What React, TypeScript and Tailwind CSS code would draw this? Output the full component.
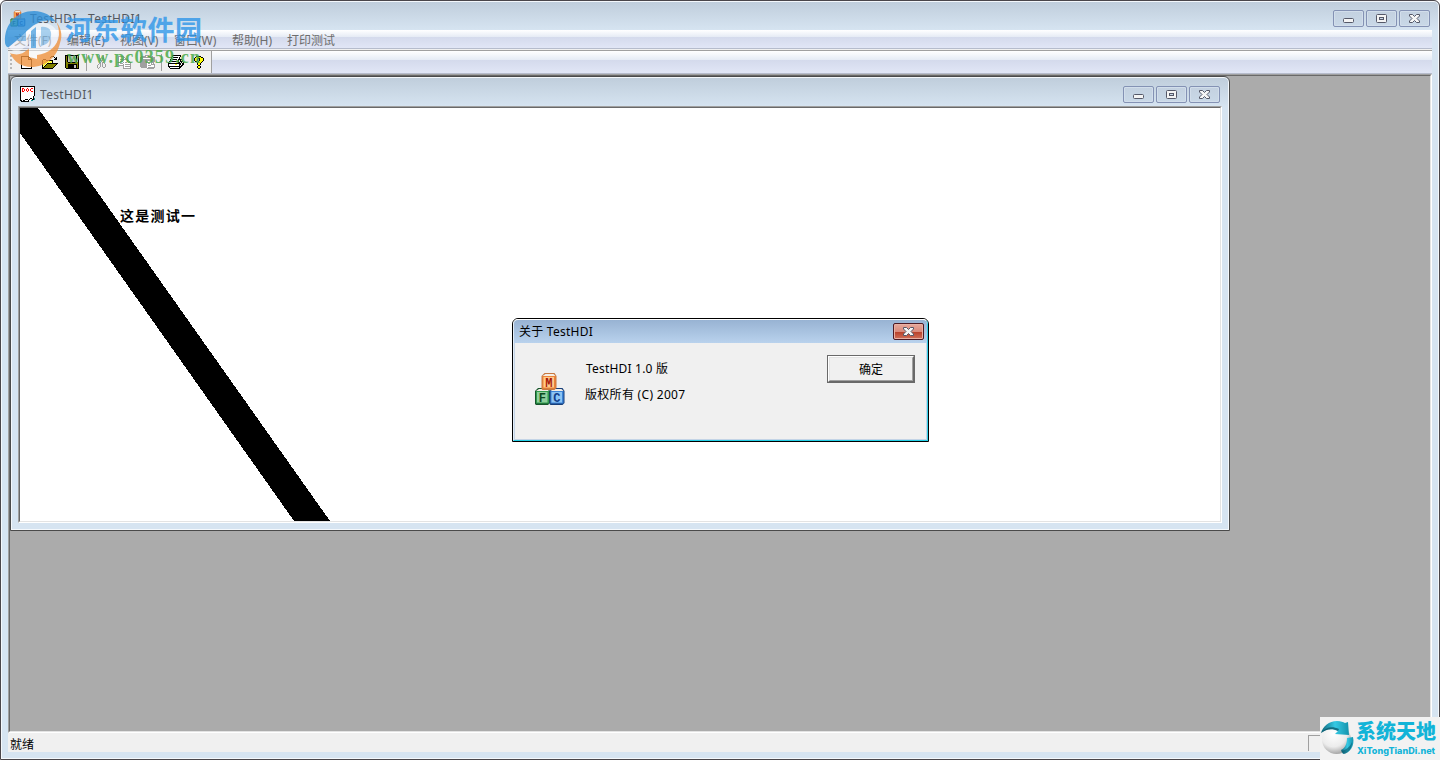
import type { ReactNode } from 'react';

const COLORS: Record<string, string> = {
  k: '#000000',
  w: '#ffffff',
  y: '#ffff00',
  p: '#ffff99',
  o: '#808000',
  g: '#a0a0a0',
  s: '#c0c0c0',
  r: '#ff0000',
  t: '#109090',
};

const NEW_FILE = [
  'kkkkkkkk....',
  'kwwwwwwkk...',
  'kwwwwwwkwk..',
  'kwwwwwwkkkk.',
  'kwwwwwwwwwk.',
  'kwwwwwwwwwk.',
  'kwwwwwwwwwk.',
  'kwwwwwwwwwk.',
  'kwwwwwwwwwk.',
  'kwwwwwwwwwk.',
  'kwwwwwwwwwk.',
  'kwwwwwwwwwk.',
  'kkkkkkkkkkk.',
];

const OPEN_FILE = [
  '.........kkk....',
  '........k...k.k.',
  '.............kk.',
  '.kkk........kkk.',
  'kpypkkkkkkk.....',
  'kypypypypyk.....',
  'kpypypypypk.....',
  'kypypkkkkkkkkkkk',
  'kpypkoooooooook.',
  'kypkoooooooook..',
  'kpkoooooooook...',
  'kkoooooooook....',
  'kkkkkkkkkkk.....',
];

const SAVE_FILE = [
  'kkkkkkkkkkkkkk',
  'kokssssssssksk',
  'kokssssssssksk',
  'kokssssssssksk',
  'kokssssssssksk',
  'kokssssssssksk',
  'kokssssssssksk',
  'kookkkkkkkkook',
  'kooooooooooook',
  'kookkkkkkkkkok',
  'kookkkkkksskok',
  'kookkkkkksskok',
  'kookkkkkksskok',
  '.kkkkkkkkkkkkk',
];

const CUT = [
  '..g...g..',
  '..g...g..',
  '..g...g..',
  '..gg.gg..',
  '...g.g...',
  '...ggg...',
  '....g....',
  '...g.gg..',
  '..gg.g.g.',
  '.g.g.g..g',
  'g..g.g..g',
  'g..g.g..g',
  'g.g...gg.',
  '.g.......',
];

const COPY = [
  'gggggg.......',
  'gwwwwgg......',
  'gwwwwgwg.....',
  'gwgggggggg...',
  'gwwwwgwwwgg..',
  'gwgggwwwwgwg.',
  'gwwwwgwggwggg',
  'gwgggwwwwwwwg',
  'gwwwwgwgggggg',
  'ggggggwwwwwwg',
  '.....gwgggggg',
  '.....gwwwwwwg',
  '.....gggggggg',
];

const PASTE = [
  '.....gggg......',
  '.gggggwwggggg..',
  'ggggggggggggggg',
  'gggwwwwwwwwgggg',
  'ggggggggggggggg',
  'ggggggggggggggg',
  'ggggggggwwwgggg',
  'gggggggwwwwggg.',
  'gggggggwggwgwg.',
  'gggggggwwwwgggg',
  'gggggggwgggwwwg',
  'gggggggwwwwwwwg',
  '.ggggggwggggggg',
  '.......ggggggg.',
];

const PRINT = [
  '....kkkkkkkkk...',
  '....kwwwwwwwk...',
  '...kwkkkkkwk....',
  '...kwwwwwwwk....',
  '..kwkkkkkwkkkk..',
  '..kwwwwwwwk.k.k.',
  '.kkkkkkkkkk.kkk.',
  'kwwwwwwwwwkk.k.k',
  'kkkkkkkkkkkkk.kk',
  'kwwwwwwyywwkkwkk',
  'kwwwwwwwwwwk.kk.',
  'kkkkkkkkkkkkkk..',
  '.kwwwwwwwwwkk...',
  '..kkkkkkkkkk....',
];

const HELP = [
  '..kkkkk...',
  '.kyyyyykk.',
  'kyyykkyyyk',
  'kyyk.kyyyk',
  'kyyk.kyyyk',
  '.kk.kyyyk.',
  '...kyyyk..',
  '...kyyk...',
  '...kyyk...',
  '....kk....',
  '...kyyk...',
  '...kyyk...',
  '....kk....',
];

const DOC = [
  'kkkkkkkkkkkkkkk',
  'kwwwwwwwwwwwwwk',
  'kwrrwwwrwwwrrwk',
  'kwrwrwrwrwrwwwk',
  'kwrwrwrwrwrwwwk',
  'kwrrwwwrwwwrrwk',
  'kwwwwwwwwwwwwwk',
  'kwwwwwwwwwwwwwk',
  'kwwwwwwwwwwwwwk',
  'kwwwwwwwwwwwwwk',
  'kwwwwwwwwwwwwk.',
  'kwwwwwwwwwwwwk.',
  'kwwwwwwwwwkkwkt',
  'kwwwwkkkwkwwkkt',
  'kkwkkwwwkwwtt..',
  '.kkkkkkkk......',
];

function PixelIcon({ rows }: { rows: string[] }) {
  const w = rows[0].length;
  return (
    <svg width={w} height={rows.length} viewBox={`0 0 ${w} ${rows.length}`} shapeRendering="crispEdges" className="block shrink-0">
      {rows.map((row, y) =>
        row.split('').map((c, x) =>
          COLORS[c] ? <rect key={`${x}-${y}`} x={x} y={y} width="1" height="1" fill={COLORS[c]} /> : null
        )
      )}
    </svg>
  );
}

function Block({ x, y, letter, face, edge, side, ink }: { x: number; y: number; letter: string; face: string; edge: string; side: string; ink: string }) {
  return (
    <g>
      <path d={`M${x} ${y + 3}l3 -3h10l2 3v12l-2 2h-12l-1 -1z`} fill={edge} />
      <path d={`M${x + 1} ${y + 3}l3 -2h8l2 2z`} fill="#f4eee6" />
      <rect x={x + 1} y={y + 3} width="13" height="12.5" fill={side} />
      <rect x={x + 2} y={y + 4} width="10.5" height="10.5" fill={face} />
      <text x={x + 7.3} y={y + 13.6} textAnchor="middle" fontSize="12" fontWeight="700" fontFamily="'Liberation Mono', monospace" fill={ink}>
        {letter}
      </text>
    </g>
  );
}

function MfcIcon({ size }: { size: number }) {
  return (
    <svg width={size} height={size} viewBox="0 0 32 34" className="block shrink-0">
      <Block x={0} y={16} letter="F" face="#8fcf9c" edge="#16542a" side="#2f9a4c" ink="#0e4a20" />
      <Block x={14.5} y={16} letter="C" face="#8cc4f4" edge="#173f7a" side="#3d84d8" ink="#123f8c" />
      <Block x={6.5} y={1} letter="M" face="#ffc98a" edge="#c87840" side="#ee8438" ink="#a81808" />
    </svg>
  );
}

function CloseGlyph() {
  return (
    <path
      d="M1.5 1.5h3l2 2 2-2h3v1.5l-2.5 2.5 2.5 2.5v1.5h-3l-2-2-2 2h-3v-1.5l2.5-2.5-2.5-2.5z"
      fill="#f6f6f6"
      stroke="#555868"
    />
  );
}

function CaptionButton({ kind }: { kind: 'min' | 'max' | 'close' }) {
  return (
    <button className="flex h-[17px] w-[31px] items-center justify-center rounded-[2px] border border-[#8492b4] bg-gradient-to-b from-[#c3d1e0] to-[#c9d8e7] shadow-[inset_0_0_0_1px_#d2deeb]">
      <svg width="13" height="11" viewBox="0 0 13 11" className="block">
        {kind === 'min' && <rect x="1.5" y="5.5" width="10" height="4" rx="1" fill="#f4f4f4" stroke="#555868" />}
        {kind === 'max' && (
          <>
            <rect x="1.5" y="1.5" width="10" height="8" rx="1" fill="#f4f4f4" stroke="#555868" />
            <rect x="4.5" y="4.5" width="4" height="2" fill="#c9d8e7" stroke="#555868" />
          </>
        )}
        {kind === 'close' && <CloseGlyph />}
      </svg>
    </button>
  );
}

function CaptionButtons() {
  return (
    <div className="ml-auto flex gap-[2px]">
      <CaptionButton kind="min" />
      <CaptionButton kind="max" />
      <CaptionButton kind="close" />
    </div>
  );
}

function Tool({ width, children }: { width: string; children: ReactNode }) {
  return <div className={`flex h-full items-center ${width}`}>{children}</div>;
}

function MenuBar() {
  return (
    <nav className="flex h-[19px] items-center border-b border-[#b6bccc] bg-[linear-gradient(#ffffff_0,#e5ebf5_7px,#d4daec_7px,#e1e6f6_18px)] pl-[6px] pt-[3px] text-[#6d6d6d]">
      <span className="w-[53px]">文件(F)</span>
      <span className="w-[53px]">编辑(E)</span>
      <span className="w-[54px]">视图(V)</span>
      <span className="w-[58px]">窗口(W)</span>
      <span className="w-[55px]">帮助(H)</span>
      <span>打印测试</span>
    </nav>
  );
}

function ToolBar() {
  return (
    <div className="flex h-[23px] border-b border-[#b6bccc] bg-[linear-gradient(#ffffff_0,#e5ebf5_9px,#d4daec_9px,#e1e6f6_22px)]">
      <div className="flex h-[22px] w-[204px] items-center border-r border-[#a0a0a0] bg-[#f0f0f0]">
        <div className="ml-[2px] flex w-[11px] flex-col gap-[2px]">
          <i className="block size-[2px] bg-[#b8b8b8]" />
          <i className="block size-[2px] bg-[#b8b8b8]" />
          <i className="block size-[2px] bg-[#b8b8b8]" />
          <i className="block size-[2px] bg-[#b8b8b8]" />
        </div>
        <Tool width="w-[21px]"><PixelIcon rows={NEW_FILE} /></Tool>
        <Tool width="w-[23px]"><PixelIcon rows={OPEN_FILE} /></Tool>
        <Tool width="w-[21px]"><PixelIcon rows={SAVE_FILE} /></Tool>
        <div className="mr-[10px] h-[17px] w-px bg-[#a0a0a0]" />
        <Tool width="w-[21px]"><PixelIcon rows={CUT} /></Tool>
        <Tool width="w-[22px]"><PixelIcon rows={COPY} /></Tool>
        <Tool width="w-[21px]"><PixelIcon rows={PASTE} /></Tool>
        <div className="mr-[6px] h-[17px] w-px bg-[#a0a0a0]" />
        <Tool width="w-[26px]"><PixelIcon rows={PRINT} /></Tool>
        <Tool width="w-[12px]"><PixelIcon rows={HELP} /></Tool>
      </div>
    </div>
  );
}

function ChildWindow() {
  return (
    <section className="flex h-[455px] w-[1220px] flex-col rounded-t-[6px] border border-[#4a4a4a] bg-[#d6e4f1] bg-[linear-gradient(#bfcddb_0,#d6e4f1_30px)] px-[7px] pb-[7px] shadow-[inset_0_0_0_1px_#f4f8fc]">
      <header className="flex h-[29px] items-center pl-[2px] pr-[2px] pt-[5px] text-[#54585e]">
        <PixelIcon rows={DOC} />
        <span className="ml-[5px] pt-px tracking-[0.3px]">TestHDI1</span>
        <CaptionButtons />
      </header>
      <div className="flex flex-1 border border-b-white border-l-[#a0a0a0] border-r-white border-t-[#a0a0a0]">
        <div className="flex-1 border border-b-[#e3e3e3] border-l-[#696969] border-r-[#e3e3e3] border-t-[#696969] bg-white">
          <svg width="1200" height="413" viewBox="0 0 1200 413" className="block">
            <polygon points="0,0 18,0 310,413 274,413 0,25" fill="#000" shapeRendering="crispEdges" />
            <text x="100" y="113" fontSize="14" fontWeight="700" textLength="75" fontFamily="'Noto Sans CJK SC', sans-serif">
              这是测试一
            </text>
          </svg>
        </div>
      </div>
    </section>
  );
}

function AboutDialog() {
  return (
    <section className="absolute left-[512px] top-[318px] flex h-[124px] w-[417px] flex-col rounded-t-[6px] border border-black bg-[#f0f0f0] text-black">
      <div className="flex flex-1 flex-col overflow-hidden rounded-t-[5px] border-b border-l border-r border-t border-b-[#22cfe6] border-l-[#e4eef8] border-r-[#33cfe6] border-t-white">
        <header className="flex h-[23px] items-center bg-gradient-to-b from-[#98b3d3] to-[#b9d2ed] pl-[5px] pr-[3px]">
          <span className="tracking-[0.25px]">关于 TestHDI</span>
          <button className="ml-auto flex h-[17px] w-[31px] items-center justify-center rounded-[2px] border border-[#4c1a24] bg-[linear-gradient(#e6a99c_0,#d8887a_8px,#b8402a_8px,#d0705a_15px)] shadow-[inset_0_0_0_1px_#e8b0a4]">
            <svg width="13" height="11" viewBox="0 0 13 11" className="block">
              <CloseGlyph />
            </svg>
          </button>
        </header>
        <div className="flex flex-1 border-b border-l border-r border-[#c4d4e6] pl-[19px] pr-[11px]">
          <div className="pt-[29px]">
            <MfcIcon size={34} />
          </div>
          <div className="ml-[17px] pt-[17px]">
            <p className="h-[26px] pl-px leading-[18px] tracking-[0.2px]">TestHDI 1.0 版</p>
            <p className="leading-[18px] tracking-[0.3px]">版权所有 (C) 2007</p>
          </div>
          <button className="ml-auto mt-[12px] h-[28px] w-[88px] border border-[#696969]">
            <span className="flex h-full items-center justify-center border border-b-[#696969] border-l-white border-r-[#696969] border-t-white">
              <span className="flex h-full w-full items-center justify-center border border-b-[#a0a0a0] border-l-[#e3e3e3] border-r-[#a0a0a0] border-t-[#e3e3e3] pt-[2px]">确定</span>
            </span>
          </button>
        </div>
      </div>
    </section>
  );
}

function HedongWatermark() {
  return (
    <div className="pointer-events-none absolute left-0 top-0">
      <svg width="210" height="76" viewBox="0 0 210 76" className="block">
        {/* blue swoosh, white arch, orange swoosh */}
        <path d="M5 42C4 24 17 11 34 11c10 0 18 5 22 11-6-2-13-2-18 1-7 3-11 8-17 14L9 47c-2 1-4-2-4-5z" fill="#2d8fd8" opacity="0.8" />
        <path d="M9 47l13-11c6-6 12-12 19-13 9-1 17 5 17 14 0 10-8 16-17 17l-2 8-10-5V44l-8 6c-5 3-10 1-12-3z" fill="#fff" opacity="0.5" />
        <path d="M17 41l9-10v10z" fill="#2d8fd8" opacity="0.5" />
        <path d="M31 31l5-4v21h-5z" fill="#2d8fd8" opacity="0.65" />
        <path d="M41 27c7-1 11 3 10 9-1 6-5 9-10 10z" fill="#2d8fd8" opacity="0.4" />
        <path d="M55 20c6 7 8 15 5 23-3 14-14 24-29 24-9 0-17-5-21-14 7 3 13 1 17-3l2-1v8l8 2v-4c11-1 21-9 22-20 0-6-1-11-4-15z" fill="#f09440" opacity="0.8" />
        <text x="65" y="40" fontSize="27" fontWeight="700" textLength="137" fontFamily="'Noto Sans CJK SC', sans-serif" fill="#2f96e8" opacity="0.8">
          河东软件园
        </text>
        <text x="67" y="63" fontSize="18" fontWeight="700" textLength="133" fontFamily="'Liberation Serif', serif" fill="#4cab4c" opacity="0.85">
          www.pc0359.cn
        </text>
      </svg>
    </div>
  );
}

function TiandiWatermark() {
  return (
    <div className="absolute bottom-0 right-0 bg-[#f2f2f2]">
      <svg width="120" height="43" viewBox="0 0 120 43" className="block">
        <defs>
          <radialGradient id="ball" cx="0.4" cy="0.3" r="0.75">
            <stop offset="0" stopColor="#ffffff" />
            <stop offset="0.6" stopColor="#ececec" />
            <stop offset="1" stopColor="#9a9a9a" />
          </radialGradient>
          <linearGradient id="arrow" x1="0" x2="1">
            <stop offset="0" stopColor="#0d6478" />
            <stop offset="0.5" stopColor="#35c9e4" />
            <stop offset="1" stopColor="#1593ac" />
          </linearGradient>
        </defs>
        <circle cx="16.5" cy="22.5" r="14.5" fill="url(#ball)" />
        <path d="M1 16C3 9 9 4 17 4c4 0 6 1 8 2l3-1 1 13-14-1 3-3c-6-3-12-2-17 2z" fill="url(#arrow)" />
        <path d="M1 16c5-6 11-7 18-4l-1 2c-6-3-12-2-17 2z" fill="#0a5365" opacity="0.75" />
        <path d="M27 21l6-1c2 9-3 16-10 17l-2-4c4-2 6-6 6-12z" fill="url(#arrow)" />
        <path d="M21 34c5-1 9-4 11-9 0 6-3 11-8 12z" fill="#0a5365" opacity="0.6" />
        <text x="36" y="22" fontSize="20" fontWeight="900" textLength="80" fontFamily="'Noto Sans CJK SC', sans-serif" fill="#12b4d8">
          系统天地
        </text>
        <text x="37" y="37" fontSize="8.8" fontWeight="800" textLength="78" lengthAdjust="spacingAndGlyphs" fontFamily="Inter, sans-serif" fill="#12b4d8">
          XiTongTianDi.net
        </text>
      </svg>
    </div>
  );
}

export default function App() {
  return (
    <div className="relative h-[760px] w-[1440px] overflow-hidden bg-white font-['Noto_Sans','Noto_Sans_CJK_SC',sans-serif] text-[12px] leading-[16px]">
      <main className="flex h-full flex-col rounded-t-[6px] border border-[#4a464a] bg-[#d6e4f1] bg-[linear-gradient(#bfcddb_0,#d6e4f1_29px)] px-[7px] pb-[7px] shadow-[inset_0_0_0_1px_#f4f8fc]">
        <header className="flex h-[29px] items-center pl-[2px] pr-[2px] pt-[6px] text-[#54585e]">
          <MfcIcon size={17} />
          <span className="ml-[3px] tracking-[0.35px]">TestHDI - TestHDI1</span>
          <CaptionButtons />
        </header>
        <MenuBar />
        <div className="h-[2px] border-b border-[#a0a0a0] bg-[#f0f0f0]" />
        <ToolBar />
        <div className="flex flex-1 border border-b-white border-l-[#a0a0a0] border-r-white border-t-[#a0a0a0]">
          <div className="flex-1 border border-b-[#e3e3e3] border-l-[#696969] border-r-[#e3e3e3] border-t-[#696969] bg-[#ababab]">
            <ChildWindow />
          </div>
        </div>
        <footer className="flex h-[19px] items-center justify-between bg-[#f0f0f0] pl-[2px] text-black">
          <span className="pt-[4px]">就绪</span>
          <div className="h-[16px] w-[124px] border-l border-t border-[#a0a0a0]" />
        </footer>
      </main>
      <AboutDialog />
      <HedongWatermark />
      <TiandiWatermark />
    </div>
  );
}
